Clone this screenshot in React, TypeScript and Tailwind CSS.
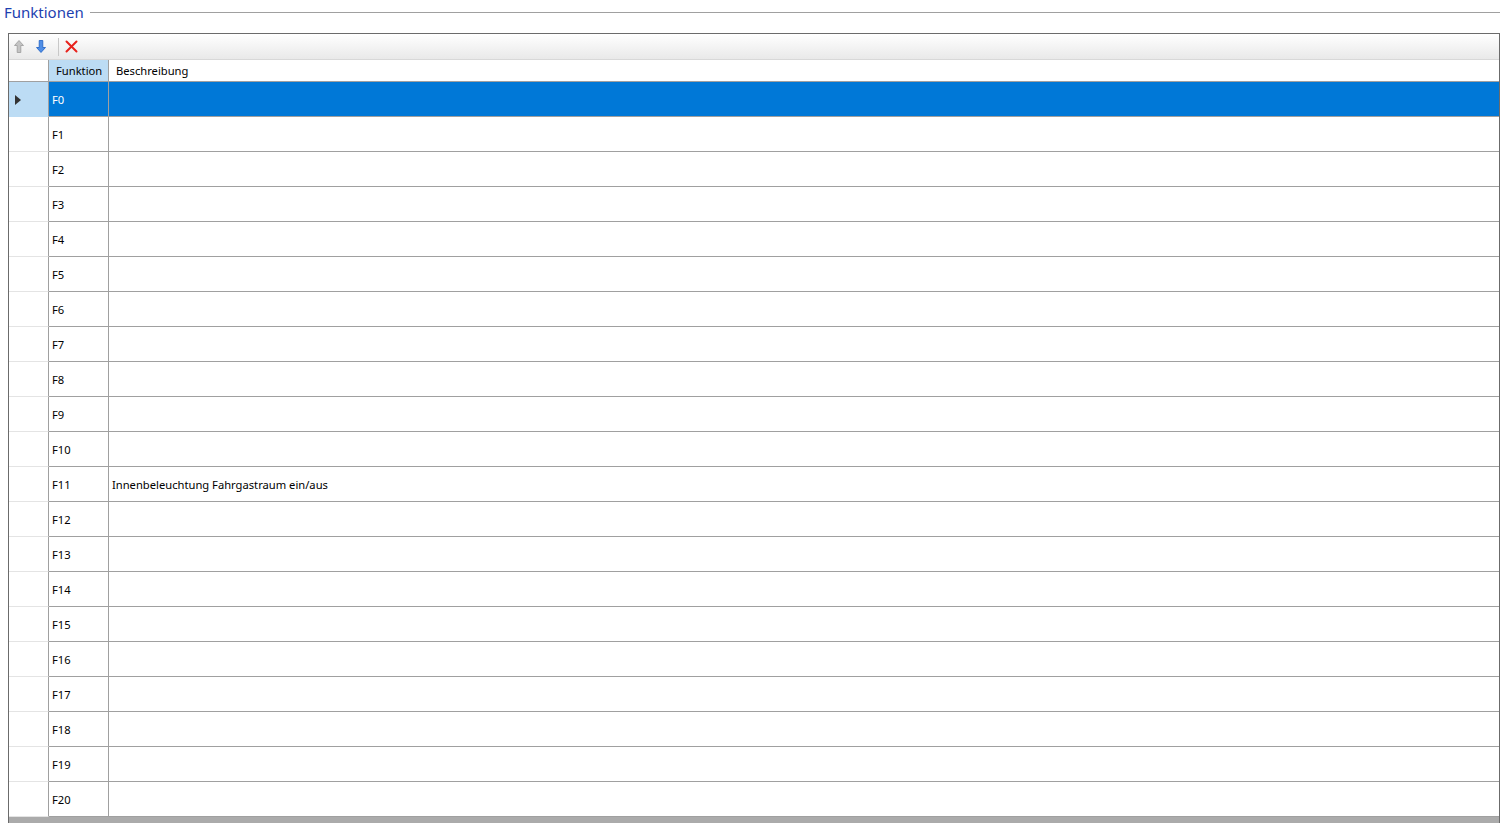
import React from "react";

const rows: { f: string; desc: string }[] = Array.from({ length: 21 }, (_, i) => ({
  f: `F${i}`,
  desc: i === 11 ? "Innenbeleuchtung Fahrgastraum ein/aus" : "",
}));

function ArrowUp() {
  return (
    <svg width="10" height="13" viewBox="0 0 10 13">
      <path d="M5 0.5 L9.5 5.5 L6.8 5.5 L6.8 12.5 L3.2 12.5 L3.2 5.5 L0.5 5.5 Z" fill="#c4c4c4" stroke="#9a9a9a" strokeWidth="0.8" />
    </svg>
  );
}

function ArrowDown() {
  return (
    <svg width="10" height="13" viewBox="0 0 10 13">
      <path d="M3.2 0.5 L6.8 0.5 L6.8 7.5 L9.5 7.5 L5 12.5 L0.5 7.5 L3.2 7.5 Z" fill="#4f8ee6" stroke="#1d5fc4" strokeWidth="0.8" />
    </svg>
  );
}

function CrossRed() {
  return (
    <svg width="13" height="13" viewBox="0 0 13 13">
      <path d="M1.5 1.5 L11.5 11.5 M11.5 1.5 L1.5 11.5" stroke="#e8221c" strokeWidth="2" strokeLinecap="round" />
    </svg>
  );
}

export default function App() {
  return (
    <div
      className="w-[1507px] h-[823px] overflow-hidden bg-white text-[11.2px] text-black"
      style={{ fontFamily: '"Noto Sans", "Liberation Sans", sans-serif' }}
    >
      {/* Group title */}
      <div className="flex items-center h-[24px] pl-[4px] pr-[7px]">
        <span className="text-[15px] text-[#1d3fb0] leading-none">Funktionen</span>
        <div className="flex-1 ml-[6px] h-px bg-[#a0a0a0]" />
      </div>

      {/* Grid */}
      <div className="mt-[9px] ml-[8px] w-[1492px] h-[800px] border border-[#6b6b6b] border-b-0 flex flex-col">
        {/* Toolbar */}
        <div className="h-[26px] flex items-center bg-gradient-to-b from-white to-[#e9e9e9] border-b border-[#d8d8d8] pl-[5px]">
          <div className="w-[10px] flex justify-center"><ArrowUp /></div>
          <div className="w-[10px] flex justify-center ml-[12px]"><ArrowDown /></div>
          <div className="w-px h-[18px] bg-[#c8c8c8] ml-[12px]" />
          <div className="ml-[6px] flex"><CrossRed /></div>
        </div>

        {/* Header */}
        <div className="flex h-[22px] border-b border-[#a0a0a0]">
          <div className="w-[40px] border-r border-[#a0a0a0] bg-white" />
          <div className="w-[60px] border-r border-[#a0a0a0] bg-[#bcdcf4] flex items-center pl-[7px] pt-[1px]">Funktion</div>
          <div className="flex-1 flex items-center pl-[7px] pt-[1px]">Beschreibung</div>
        </div>

        {/* Rows */}
        <div className="flex-1 flex flex-col">
          {rows.map((r, i) => {
            const sel = i === 0;
            return (
              <div key={r.f} className="flex h-[35px] shrink-0">
                <div
                  className={`w-[40px] border-r border-r-[#a0a0a0] border-b flex items-center pl-[6px] ${
                    sel ? "bg-[#bcdcf4] border-b-[#bcdcf4]" : "bg-white border-b-[#e4e4e4]"
                  }`}
                >
                  {sel && (
                    <svg width="6" height="10" viewBox="0 0 6 10" className="mt-[1px]">
                      <path d="M0 0 L6 5 L0 10 Z" fill="#333" />
                    </svg>
                  )}
                </div>
                <div
                  className={`w-[60px] border-r border-b border-[#a0a0a0] flex items-center pl-[3px] pt-[2px] ${
                    sel ? "bg-[#0078d7] text-white" : ""
                  }`}
                >
                  {r.f}
                </div>
                <div
                  className={`flex-1 border-b border-[#a0a0a0] flex items-center pl-[3px] pt-[2px] ${
                    sel ? "bg-[#0078d7] text-white" : ""
                  }`}
                >
                  {r.desc}
                </div>
              </div>
            );
          })}
          <div className="flex-1 bg-[#ababab]" />
        </div>
      </div>
    </div>
  );
}
